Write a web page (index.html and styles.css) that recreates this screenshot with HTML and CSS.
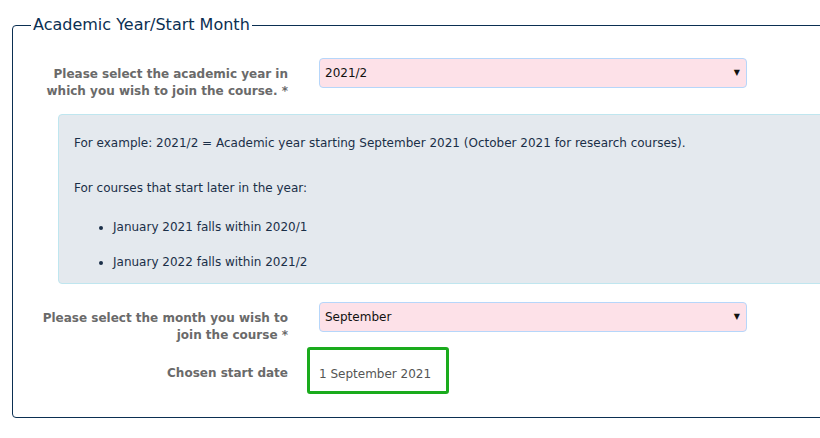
FILE: index.html
```html
<!DOCTYPE html>
<html lang="en">
<head>
<meta charset="utf-8">
<title>Academic Year/Start Month</title>
<link rel="stylesheet" href="styles.css">
</head>
<body>
<fieldset class="panel">
  <legend class="panel-title">Academic Year/Start Month</legend>

  <div class="row row-year">
    <label class="field-label">Please select the academic year in which you wish to join the course. *</label>
    <div class="select"><span class="select-value">2021/2</span><span class="select-arrow">&#9660;</span></div>
  </div>

  <div class="info">
    <p class="info-p">For example: 2021/2 = Academic year starting September 2021 (October 2021 for research courses).</p>
    <p class="info-p info-p-last">For courses that start later in the year:</p>
    <ul class="info-list">
      <li class="info-item">January 2021 falls within 2020/1</li>
      <li class="info-item">January 2022 falls within 2021/2</li>
    </ul>
  </div>

  <div class="row row-month">
    <label class="field-label">Please select the month you wish to join the course *</label>
    <div class="select"><span class="select-value">September</span><span class="select-arrow">&#9660;</span></div>
  </div>

  <div class="row row-date">
    <div class="field-label field-label-date">Chosen start date</div>
    <div class="date-box">1 September 2021</div>
  </div>
</fieldset>
</body>
</html>
```
FILE: styles.css
```css
html, body {
  margin: 0;
  padding: 0;
  background: #ffffff;
}
body {
  font-family: "DejaVu Sans", Verdana, sans-serif;
  font-size: 12px;
  line-height: 17px;
  overflow: hidden;
}
.panel {
  margin: 15px 0 0 12px;
  width: 830px;
  padding: 0 0 23px 0;
  border: 1px solid #0b2f52;
  border-radius: 4px;
  box-sizing: border-box;
}
.panel-title {
  margin-left: 18px;
  padding: 0 2px;
  font-size: 16px;
  line-height: 20px;
  color: #0b2f52;
}
.row {
  display: grid;
  grid-template-columns: 275px 428px;
  column-gap: 31px;
  align-items: start;
}
.row-year {
  margin-top: 23px;
  height: 30px;
}
.field-label {
  padding: 8px 0 0 25px;
  text-align: right;
  font-weight: bold;
  color: #6a6a6a;
}
.select {
  height: 30px;
  box-sizing: border-box;
  border: 1px solid #b6d6fa;
  border-radius: 4px;
  background: #fde1e8;
  display: flex;
  align-items: center;
  justify-content: space-between;
  padding: 0 6px 0 5px;
  color: #111111;
}
.select-arrow {
  font-size: 8px;
  line-height: 8px;
  color: #111111;
}
.info {
  margin: 26px 0 0 45px;
  padding: 20px 15px 12px 15px;
  background: #e4e9ee;
  border: 1px solid #bfe6ef;
  border-radius: 4px;
  color: #1a2f48;
}
.info-p {
  margin: 0 0 28px 0;
}
.info-p-last {
  margin-bottom: 22px;
}
.info-list {
  margin: 0;
  padding-left: 39px;
}
.info-item {
  margin-bottom: 18px;
}
.info-item:last-child {
  margin-bottom: 0;
}
.row-month {
  margin-top: 18px;
}
.row-date {
  margin-top: 3px;
  align-items: center;
}
.field-label-date {
  padding-top: 5px;
}
.date-box {
  margin-left: -12px;
  width: 142px;
  height: 47px;
  box-sizing: border-box;
  border: 3px solid #1aab1d;
  border-radius: 3px;
  padding: 16px 0 0 9px;
  color: #555555;
}
```
